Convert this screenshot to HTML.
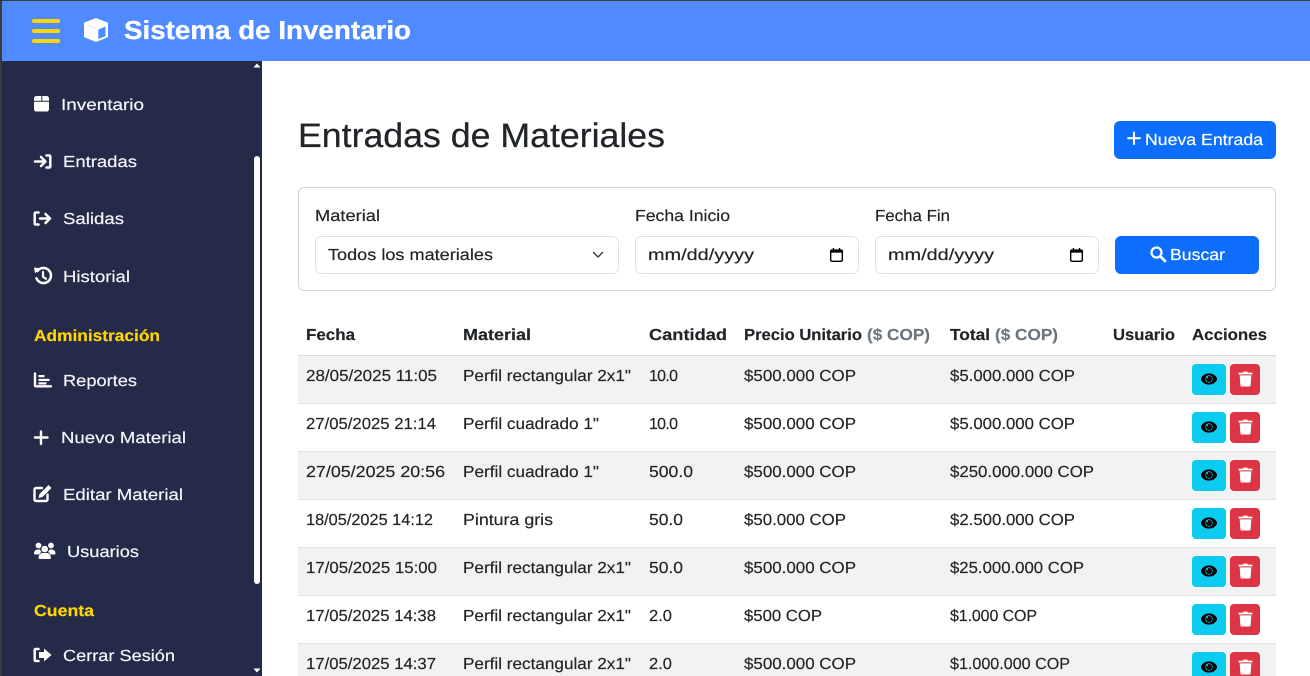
<!DOCTYPE html>
<html lang="es">
<head>
<meta charset="utf-8">
<title>Entradas de Materiales</title>
<style>
html,body{margin:0;padding:0;width:1310px;height:676px;overflow:hidden;background:#fff}
svg{display:block;position:absolute;left:0;top:0}
text{font-family:"Liberation Sans",sans-serif;font-size:16px;fill:#212529;stroke:#212529;stroke-width:.18px;text-rendering:geometricPrecision}
.s text{fill:#f4f6fb;stroke:#f4f6fb;font-size:16px}
.s text.y,.y{fill:#ffd700;stroke:#ffd700;font-weight:700}
.b{font-weight:700}
.g{font-weight:700;fill:#6c757d;stroke:#6c757d}
text.wt{fill:#fff;stroke:#fff}
</style>
</head>
<body>
<svg width="1310" height="676" viewBox="0 0 1310 676" xmlns="http://www.w3.org/2000/svg">
<defs>
<symbol id="eye" viewBox="0 0 576 512"><path d="M572.52 241.4C518.29 135.59 410.93 64 288 64S57.68 135.64 3.48 241.41a32.35 32.35 0 0 0 0 29.19C57.71 376.41 165.07 448 288 448s230.32-71.64 284.52-177.41a32.35 32.35 0 0 0 0-29.19zM288 400a144 144 0 1 1 144-144 143.93 143.93 0 0 1-144 144zm0-240a95.31 95.31 0 0 0-25.31 3.79 47.85 47.85 0 0 1-66.9 66.9A95.78 95.78 0 1 0 288 160z" fill="#000" stroke="#000" stroke-width="22"/></symbol>
<symbol id="trash" viewBox="0 0 14 15"><path d="M4.600 1.100C4.800.4 5.200.1 5.800.1h2.400c.6 0 1 .3 1.200 1H13c.6 0 1 .3 1 .9v.9H0V2c0-.6.4-.9 1-.9zM1.200 3.900h11.600l-.7 9.800c-.1.800-.6 1.300-1.300 1.300H3.200c-.7 0-1.200-.5-1.300-1.300z" fill="#fff"/></symbol>
<symbol id="cal" viewBox="0 0 14 15"><path d="M3 0h1.500v1.500h5V0H11v1.500h1.200c1 0 1.800.8 1.800 1.800v9.900c0 1-.8 1.800-1.800 1.800H1.800C.8 15 0 14.200 0 13.200V3.300C0 2.300.8 1.500 1.800 1.500H3zM1.500 5v8.200c0 .2.100.3.300.3h10.400c.2 0 .3-.1.300-.3V5z" fill="#000"/></symbol>
</defs>

<rect width="1310" height="676" fill="#fff"/>

<!-- header -->
<rect x="0" y="0" width="1310" height="61" fill="#4f8bff"/>
<rect x="0" y="0" width="1310" height="1" fill="#3c3c3c"/>
<rect x="0" y="0" width="2" height="676" fill="#3c3c3c"/>
<rect x="32" y="19" width="28" height="4" rx="2" fill="#ffd700"/>
<rect x="32" y="29" width="28" height="4" rx="2" fill="#ffd700"/>
<rect x="32" y="39" width="28" height="4" rx="2" fill="#ffd700"/>
<path d="M96 18l12 4.700v14.400L96 42l-12-4.900V22.700z" fill="#fff"/>
<path d="M98.300 29.500l7.200-3v9.600l-7.200 3z" fill="#4f8bff"/>
<path d="M87 24.700l9 3.600" fill="none" stroke="#c9dcff" stroke-width=".8"/>
<text x="124" y="39" style="font-size:26px;stroke-width:.3px;fill:#fff;stroke:#fff;font-weight:700" textLength="287" lengthAdjust="spacingAndGlyphs">Sistema de Inventario</text>

<!-- sidebar -->
<rect x="2" y="61" width="260" height="615" fill="#252a48"/>
<rect x="254" y="156" width="6" height="428" rx="3" fill="#fff"/>
<path d="M253.500 67.500L257 63.500l3.500 4z" fill="#fff"/>
<path d="M253.500 668.500L257 672.500l3.500-4z" fill="#fff"/>

<g class="s">
<path d="M36.500 96h4.800v4.800H34v-2.300c0-1.400 1.100-2.500 2.500-2.500zM42.300 96h4.200c1.400 0 2.500 1.100 2.500 2.500v2.300h-6.700zM34 101.800h15v7.700c0 1.100-.9 2-2 2H36c-1.100 0-2-.9-2-2z" fill="#fff"/>
<text x="61" y="110" textLength="83" lengthAdjust="spacingAndGlyphs">Inventario</text>

<path d="M35 161.500h10M41 157l4.500 4.500-4.500 4.500M46.500 155.500h2.500c.8 0 1.300.5 1.300 1.300v9.400c0 .8-.5 1.300-1.300 1.300h-2.500" fill="none" stroke="#fff" stroke-width="2.500" stroke-linecap="round" stroke-linejoin="round"/>
<text x="63" y="167" textLength="74" lengthAdjust="spacingAndGlyphs">Entradas</text>

<path d="M38.500 212.500h-2.500c-.8 0-1.300.5-1.300 1.300v9.400c0 .8.500 1.300 1.300 1.300h2.500M40 218.500h10M45.500 214l4.500 4.500-4.500 4.500" fill="none" stroke="#fff" stroke-width="2.500" stroke-linecap="round" stroke-linejoin="round"/>
<text x="63" y="224" textLength="61" lengthAdjust="spacingAndGlyphs">Salidas</text>

<path d="M37.500 271a7.500 7.500 0 1 1-1 7.300" fill="none" stroke="#fff" stroke-width="2.500" stroke-linecap="round"/>
<path d="M34 267.500l6.200.8-5.200 5z" fill="#fff"/>
<path d="M43 272v4.800l3 2" fill="none" stroke="#fff" stroke-width="2.200" stroke-linecap="round"/>
<text x="63" y="282" textLength="67" lengthAdjust="spacingAndGlyphs">Historial</text>

<text x="34" y="341" class="y" textLength="126" lengthAdjust="spacingAndGlyphs">Administración</text>

<path d="M35 373.500v12c0 .5.300.8.800.8H51" fill="none" stroke="#fff" stroke-width="2.400" stroke-linecap="round"/>
<rect x="38.500" y="375" width="6" height="2.200" fill="#fff"/>
<rect x="38.500" y="378.800" width="11" height="2.200" fill="#fff"/>
<rect x="38.500" y="382.300" width="8" height="2.200" fill="#fff"/>
<text x="63" y="386" textLength="74" lengthAdjust="spacingAndGlyphs">Reportes</text>

<path d="M41 431.500v12.500M35 437.500h12.500" fill="none" stroke="#fff" stroke-width="2.400" stroke-linecap="round"/>
<text x="61" y="443" textLength="125" lengthAdjust="spacingAndGlyphs">Nuevo Material</text>

<path d="M42 488h-6c-.9 0-1.500.6-1.500 1.500v10c0 .9.600 1.500 1.500 1.500h10c.9 0 1.500-.6 1.500-1.500v-5" fill="none" stroke="#fff" stroke-width="2.400" stroke-linecap="round"/>
<path d="M48.500 485l3 3-9 9-4 1 1-4z" fill="#fff"/>
<text x="63" y="500" textLength="120" lengthAdjust="spacingAndGlyphs">Editar Material</text>

<circle cx="38.500" cy="545.500" r="2.900" fill="#fff"/>
<circle cx="51" cy="545.500" r="2.900" fill="#fff"/>
<circle cx="44.700" cy="549" r="3.300" fill="#fff"/>
<path d="M34 553.500c0-2.500 1.500-4 3.500-4h2.500c.3 1 1 2 1.500 2.500-1.200.5-2 1.500-2.200 2.500H35c-.6 0-1-.4-1-1zM55.500 553.500c0-2.500-1.500-4-3.500-4h-2.500c-.3 1-1 2-1.500 2.500 1.200.5 2 1.500 2.200 2.500H54.500c.6 0 1-.4 1-1zM38.500 558c0-3 1.800-5 4-5h4.400c2.200 0 4 2 4 5 0 .6-.4 1-1 1H39.500c-.6 0-1-.4-1-1z" fill="#fff"/>
<text x="67" y="557" textLength="72" lengthAdjust="spacingAndGlyphs">Usuarios</text>

<text x="34" y="616" class="y" textLength="60" lengthAdjust="spacingAndGlyphs">Cuenta</text>

<path d="M38.500 649h-2.500c-.8 0-1.300.5-1.300 1.300v9.400c0 .8.500 1.300 1.300 1.300h2.500" fill="none" stroke="#fff" stroke-width="2.500" stroke-linecap="round"/>
<path d="M44 648.500l7.500 6.500-7.500 6.500v-3.500h-5v-6h5z" fill="#fff"/>
<text x="63" y="661" textLength="112" lengthAdjust="spacingAndGlyphs">Cerrar Sesión</text>
</g>

<!-- title -->
<text x="298" y="147" style="font-size:34px;stroke-width:.25px" textLength="367" lengthAdjust="spacingAndGlyphs">Entradas de Materiales</text>
<rect x="1114" y="121" width="162" height="38" rx="6" fill="#0d6efd"/>
<path d="M1134 132.500v11.500M1128.200 138.200h11.600" stroke="#fff" stroke-width="2.100" stroke-linecap="round"/>
<text x="1145" y="145" class="wt" textLength="118" lengthAdjust="spacingAndGlyphs">Nueva Entrada</text>

<!-- filter card -->
<rect x="298.500" y="187.500" width="977" height="103" rx="6" fill="#fff" stroke="#d2d3d5"/>
<text x="315" y="221" textLength="65" lengthAdjust="spacingAndGlyphs">Material</text>
<text x="635" y="221" textLength="95" lengthAdjust="spacingAndGlyphs">Fecha Inicio</text>
<text x="875" y="221" textLength="75" lengthAdjust="spacingAndGlyphs">Fecha Fin</text>

<rect x="315.500" y="236.500" width="303" height="37" rx="6" fill="#fff" stroke="#dee2e6"/>
<text x="328" y="260" textLength="165" lengthAdjust="spacingAndGlyphs">Todos los materiales</text>
<path d="M593.500 252.500l4.500 4.500 4.500-4.500" fill="none" stroke="#343a40" stroke-width="1.400" stroke-linecap="round" stroke-linejoin="round"/>

<rect x="635.500" y="236.500" width="223" height="37" rx="6" fill="#fff" stroke="#dee2e6"/>
<text x="648" y="260" textLength="106" lengthAdjust="spacingAndGlyphs">mm/dd/yyyy</text>
<use href="#cal" x="830" y="248" width="13" height="14"/>

<rect x="875.500" y="236.500" width="223" height="37" rx="6" fill="#fff" stroke="#dee2e6"/>
<text x="888" y="260" textLength="106" lengthAdjust="spacingAndGlyphs">mm/dd/yyyy</text>
<use href="#cal" x="1070" y="248" width="13" height="14"/>

<rect x="1115" y="236" width="144" height="38" rx="6" fill="#0d6efd"/>
<circle cx="1156.500" cy="252.500" r="5" fill="none" stroke="#fff" stroke-width="2.300"/>
<path d="M1160.500 256.500l4.500 4.500" stroke="#fff" stroke-width="2.700" stroke-linecap="round"/>
<text x="1170" y="260" class="wt" textLength="55" lengthAdjust="spacingAndGlyphs">Buscar</text>

<!-- table head -->
<text x="306" y="340" class="b" textLength="49" lengthAdjust="spacingAndGlyphs">Fecha</text>
<text x="463" y="340" class="b" textLength="68" lengthAdjust="spacingAndGlyphs">Material</text>
<text x="649" y="340" class="b" textLength="78" lengthAdjust="spacingAndGlyphs">Cantidad</text>
<text x="744" y="340" class="b" textLength="118" lengthAdjust="spacingAndGlyphs">Precio Unitario</text>
<text x="867" y="340" class="g" textLength="63" lengthAdjust="spacingAndGlyphs">($ COP)</text>
<text x="950" y="340" class="b" textLength="40" lengthAdjust="spacingAndGlyphs">Total</text>
<text x="995" y="340" class="g" textLength="63" lengthAdjust="spacingAndGlyphs">($ COP)</text>
<text x="1113" y="340" class="b" textLength="62" lengthAdjust="spacingAndGlyphs">Usuario</text>
<text x="1192" y="340" class="b" textLength="75" lengthAdjust="spacingAndGlyphs">Acciones</text>

<!-- stripes -->
<rect x="298" y="356" width="978" height="47" fill="#f2f2f2"/>
<rect x="298" y="452" width="978" height="47" fill="#f2f2f2"/>
<rect x="298" y="548" width="978" height="47" fill="#f2f2f2"/>
<rect x="298" y="644" width="978" height="32" fill="#f2f2f2"/>
<rect x="298" y="355" width="978" height="1" fill="#d8d9db"/>
<rect x="298" y="403" width="978" height="1" fill="#dee2e6"/>
<rect x="298" y="451" width="978" height="1" fill="#dee2e6"/>
<rect x="298" y="499" width="978" height="1" fill="#dee2e6"/>
<rect x="298" y="547" width="978" height="1" fill="#dee2e6"/>
<rect x="298" y="595" width="978" height="1" fill="#dee2e6"/>
<rect x="298" y="643" width="978" height="1" fill="#dee2e6"/>

<!-- rows -->
<text x="306" y="381" textLength="131" lengthAdjust="spacingAndGlyphs">28/05/2025 11:05</text>
<text x="463" y="381" textLength="168" lengthAdjust="spacingAndGlyphs">Perfil rectangular 2x1"</text>
<text x="649" y="381" textLength="29" lengthAdjust="spacing">10.0</text>
<text x="744" y="381" textLength="112" lengthAdjust="spacingAndGlyphs">$500.000 COP</text>
<text x="950" y="381" textLength="125" lengthAdjust="spacingAndGlyphs">$5.000.000 COP</text>

<text x="306" y="429" textLength="130" lengthAdjust="spacingAndGlyphs">27/05/2025 21:14</text>
<text x="463" y="429" textLength="136" lengthAdjust="spacingAndGlyphs">Perfil cuadrado 1"</text>
<text x="649" y="429" textLength="29" lengthAdjust="spacing">10.0</text>
<text x="744" y="429" textLength="112" lengthAdjust="spacingAndGlyphs">$500.000 COP</text>
<text x="950" y="429" textLength="125" lengthAdjust="spacingAndGlyphs">$5.000.000 COP</text>

<text x="306" y="477" textLength="139" lengthAdjust="spacingAndGlyphs">27/05/2025 20:56</text>
<text x="463" y="477" textLength="136" lengthAdjust="spacingAndGlyphs">Perfil cuadrado 1"</text>
<text x="649" y="477" textLength="44" lengthAdjust="spacingAndGlyphs">500.0</text>
<text x="744" y="477" textLength="112" lengthAdjust="spacingAndGlyphs">$500.000 COP</text>
<text x="950" y="477" textLength="144" lengthAdjust="spacingAndGlyphs">$250.000.000 COP</text>

<text x="306" y="525" textLength="127" lengthAdjust="spacingAndGlyphs">18/05/2025 14:12</text>
<text x="463" y="525" textLength="90" lengthAdjust="spacingAndGlyphs">Pintura gris</text>
<text x="649" y="525" textLength="34" lengthAdjust="spacingAndGlyphs">50.0</text>
<text x="744" y="525" textLength="102" lengthAdjust="spacingAndGlyphs">$50.000 COP</text>
<text x="950" y="525" textLength="125" lengthAdjust="spacingAndGlyphs">$2.500.000 COP</text>

<text x="306" y="573" textLength="131" lengthAdjust="spacingAndGlyphs">17/05/2025 15:00</text>
<text x="463" y="573" textLength="168" lengthAdjust="spacingAndGlyphs">Perfil rectangular 2x1"</text>
<text x="649" y="573" textLength="34" lengthAdjust="spacingAndGlyphs">50.0</text>
<text x="744" y="573" textLength="112" lengthAdjust="spacingAndGlyphs">$500.000 COP</text>
<text x="950" y="573" textLength="134" lengthAdjust="spacingAndGlyphs">$25.000.000 COP</text>

<text x="306" y="621" textLength="130" lengthAdjust="spacingAndGlyphs">17/05/2025 14:38</text>
<text x="463" y="621" textLength="168" lengthAdjust="spacingAndGlyphs">Perfil rectangular 2x1"</text>
<text x="649" y="621" textLength="23" lengthAdjust="spacingAndGlyphs">2.0</text>
<text x="744" y="621" textLength="78" lengthAdjust="spacingAndGlyphs">$500 COP</text>
<text x="950" y="621" textLength="87" lengthAdjust="spacing">$1.000 COP</text>

<text x="306" y="669" textLength="130" lengthAdjust="spacingAndGlyphs">17/05/2025 14:37</text>
<text x="463" y="669" textLength="168" lengthAdjust="spacingAndGlyphs">Perfil rectangular 2x1"</text>
<text x="649" y="669" textLength="23" lengthAdjust="spacingAndGlyphs">2.0</text>
<text x="744" y="669" textLength="112" lengthAdjust="spacingAndGlyphs">$500.000 COP</text>
<text x="950" y="669" textLength="120" lengthAdjust="spacingAndGlyphs">$1.000.000 COP</text>

<!-- action buttons -->
<g>
<rect x="1192" y="364" width="34" height="31" rx="4" fill="#0dcaf0"/><rect x="1230" y="364" width="30" height="31" rx="4" fill="#dc3545"/>
<use href="#eye" x="1201" y="371" width="16" height="16"/><use href="#trash" x="1238.500" y="371.500" width="14" height="15"/>
<rect x="1192" y="412" width="34" height="31" rx="4" fill="#0dcaf0"/><rect x="1230" y="412" width="30" height="31" rx="4" fill="#dc3545"/>
<use href="#eye" x="1201" y="419" width="16" height="16"/><use href="#trash" x="1238.500" y="419.500" width="14" height="15"/>
<rect x="1192" y="460" width="34" height="31" rx="4" fill="#0dcaf0"/><rect x="1230" y="460" width="30" height="31" rx="4" fill="#dc3545"/>
<use href="#eye" x="1201" y="467" width="16" height="16"/><use href="#trash" x="1238.500" y="467.500" width="14" height="15"/>
<rect x="1192" y="508" width="34" height="31" rx="4" fill="#0dcaf0"/><rect x="1230" y="508" width="30" height="31" rx="4" fill="#dc3545"/>
<use href="#eye" x="1201" y="515" width="16" height="16"/><use href="#trash" x="1238.500" y="515.500" width="14" height="15"/>
<rect x="1192" y="556" width="34" height="31" rx="4" fill="#0dcaf0"/><rect x="1230" y="556" width="30" height="31" rx="4" fill="#dc3545"/>
<use href="#eye" x="1201" y="563" width="16" height="16"/><use href="#trash" x="1238.500" y="563.500" width="14" height="15"/>
<rect x="1192" y="604" width="34" height="31" rx="4" fill="#0dcaf0"/><rect x="1230" y="604" width="30" height="31" rx="4" fill="#dc3545"/>
<use href="#eye" x="1201" y="611" width="16" height="16"/><use href="#trash" x="1238.500" y="611.500" width="14" height="15"/>
<rect x="1192" y="652" width="34" height="31" rx="4" fill="#0dcaf0"/><rect x="1230" y="652" width="30" height="31" rx="4" fill="#dc3545"/>
<use href="#eye" x="1201" y="659" width="16" height="16"/><use href="#trash" x="1238.500" y="659.500" width="14" height="15"/>
</g>
</svg>
</body>
</html>
